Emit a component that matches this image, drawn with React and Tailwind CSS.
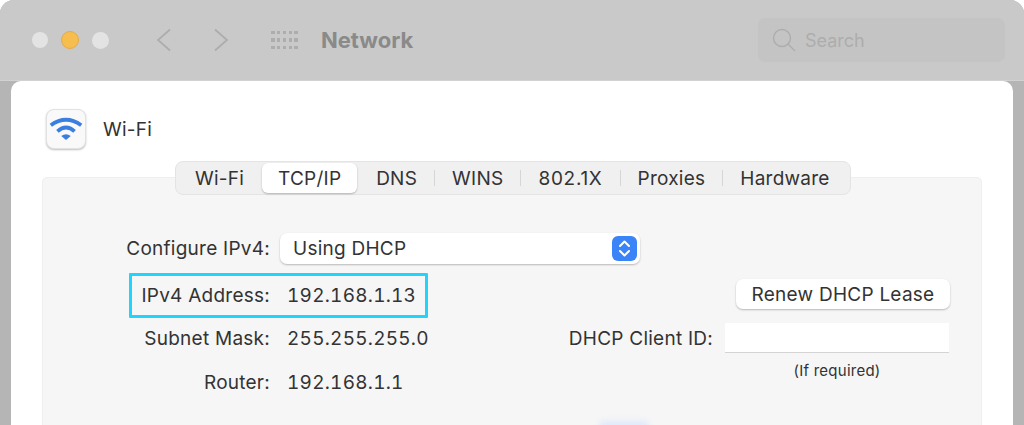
const tabs = ['Wi-Fi', 'TCP/IP', 'DNS', 'WINS', '802.1X', 'Proxies', 'Hardware'];

function WifiIcon() {
  return (
    <svg viewBox="0 0 40 40" className="w-[40px] h-[40px]" fill="none" stroke="#3a7fe0" strokeWidth="4">
      <path d="M4 16Q20 4.5 36 16" />
      <path d="M11 22.5Q20 14.5 29 22.5" />
      <path d="M20 31.5L15 27.3Q20 23.8 25 27.3Z" fill="#3a7fe0" stroke="none" />
    </svg>
  );
}

function Row({ label, value }) {
  return (
    <div className="flex items-center gap-[17px] h-[44px] pt-[2px] whitespace-nowrap">
      <span className="w-[141px] shrink-0 text-right">{label}</span>
      <span className="tabular-nums">{value}</span>
    </div>
  );
}

export default function App() {
  return (
    <div className="w-[1024px] h-[425px] overflow-hidden bg-white text-[19px] tracking-[0.25px] text-[#333333]" style={{ fontFamily: 'Inter, "Noto Sans", sans-serif' }}>
      <div className="h-[425px] rounded-t-[14px] bg-[#b5b5b5] flex flex-col">
        {/* Title bar */}
        <div className="h-[81px] shrink-0 rounded-t-[14px] bg-[#c9c9c9] border-b border-[#d2d2d2] flex items-center pl-[32px] pr-[19px]">
          <div className="flex items-center">
            <div className="w-[16px] h-[16px] rounded-full bg-[#e3e3e3]" />
            <div className="ml-[13px] w-[18px] h-[18px] rounded-full bg-[#f6bd4f] border border-[#e5ab45]" />
            <div className="ml-[13px] w-[17px] h-[17px] rounded-full bg-[#e3e3e3]" />
          </div>
          <svg viewBox="0 0 16 24" className="ml-[47px] w-[16px] h-[24px]" fill="none" stroke="#adadad" strokeWidth="1.8">
            <path d="M14 1.5L2 12L14 22.5" />
          </svg>
          <svg viewBox="0 0 16 24" className="ml-[41px] w-[16px] h-[24px]" fill="none" stroke="#adadad" strokeWidth="1.8">
            <path d="M2 1.5L14 12L2 22.5" />
          </svg>
          <div className="ml-[42px] grid grid-cols-5 gap-x-[2.25px] gap-y-[4px]">
            {Array.from({ length: 15 }).map((_, i) => (
              <div key={i} className="w-[3.6px] h-[3.6px] bg-[#adadad]" />
            ))}
          </div>
          <div className="ml-[23px] text-[22px] tracking-normal font-bold text-[#8a8a8a]">Network</div>
          <div className="ml-auto w-[247px] h-[44px] rounded-[7px] bg-[#c4c4c4] flex items-center pl-[14px] gap-[9px] text-[18px] tracking-normal">
            <svg viewBox="0 0 24 24" className="w-[24px] h-[24px]" fill="none" stroke="#adadad" strokeWidth="1.4">
              <circle cx="10" cy="10" r="8.5" />
              <path d="M16 16L23 23" />
            </svg>
            <span className="text-[#adadad] pt-px">Search</span>
          </div>
        </div>

        {/* Pane */}
        <div className="flex-1 mx-[11px] rounded-t-[10px] bg-white px-[31px] pt-[28px]">
          <div className="flex items-center gap-[17px] h-[40px] ml-[4px]">
            <div className="w-[40px] h-[40px] rounded-[8px] bg-[#f9f9f9] border border-[#e2e2e2] shadow-[0_1px_2px_rgba(0,0,0,0.25)] flex items-center justify-center">
              <WifiIcon />
            </div>
            <span className="pt-[2px]">Wi-Fi</span>
          </div>

          <div className="relative mt-[28px] h-[300px] rounded-t-[5px] bg-[#f6f6f6] border border-[#efefef] pt-[55px] pl-[86px]">
            {/* Tabs */}
            <div className="absolute -top-[17px] left-[132px] w-[676px] h-[34px] flex items-center rounded-[8px] bg-[#f0f0f0] border border-[#e4e4e4] pl-[19px] whitespace-nowrap">
              {tabs.map((t, i) => (
                <div key={t} className="flex items-center shrink-0">
                  {t === 'TCP/IP' ? (
                    <div className="ml-[18px] mr-[2px] h-[30px] w-[95px] pt-[2px] rounded-[6px] bg-white shadow-[0_1px_2px_rgba(0,0,0,0.25)] flex items-center justify-center">{t}</div>
                  ) : (
                    <div className={`pt-[2px] ${i > 1 ? 'px-[17px]' : ''} ${t === '802.1X' ? 'tracking-[0.7px]' : ''}`}>{t}</div>
                  )}
                  {i > 1 && i < tabs.length - 1 && <div className="w-px h-[16px] bg-[#d6d6d6]" />}
                </div>
              ))}
            </div>

            {/* Configure row */}
            <div className="flex items-center gap-[10px] h-[31px]">
              <span className="w-[141px] shrink-0 flex justify-end whitespace-nowrap pt-[2px]">Configure IPv4:</span>
              <div className="w-[360px] h-[31px] rounded-[7px] bg-white shadow-[0_1px_2px_rgba(0,0,0,0.25)] flex items-center justify-between pl-[13px] pr-[3px]">
                <span className="pt-[2px]">Using DHCP</span>
                <div className="w-[25px] h-[25px] rounded-[6px] bg-[#3a84f7] flex items-center justify-center">
                  <svg viewBox="0 0 25 25" className="w-[25px] h-[25px]" fill="none" stroke="white" strokeWidth="2" strokeLinecap="round" strokeLinejoin="round">
                    <path d="M8 10L12.5 5.5L17 10" />
                    <path d="M8 15L12.5 19.5L17 15" />
                  </svg>
                </div>
              </div>
            </div>

            <div className="flex pt-[9px]">
              {/* Left column */}
              <div className="w-[299px] shrink-0">
                <div className="h-[45px] mb-[-2px] flex items-center gap-[17px] border-[3px] border-[#22d3fb] rounded-[1px] whitespace-nowrap">
                  <span className="w-[138px] shrink-0 text-right pt-[2px]">IPv4 Address:</span>
                  <span className="tabular-nums pt-[2px]">192.168.1.13</span>
                </div>
                <Row label="Subnet Mask:" value="255.255.255.0" />
                <Row label="Router:" value="192.168.1.1" />
                <div className="mt-[17px] ml-[470px] w-[50px] h-[10px] rounded-[5px] bg-[#dfe9fa] blur-[3px]" />
              </div>

              {/* Right column */}
              <div className="flex-1 flex flex-col items-end pr-[31px] pt-[6px]">
                <button className="w-[214px] h-[30px] pt-[2px] rounded-[7px] bg-white shadow-[0_1px_2px_rgba(0,0,0,0.25)]">Renew DHCP Lease</button>
                <div className="mt-[14px] mr-[1px] flex items-center gap-[12px]">
                  <span className="whitespace-nowrap pt-[2px]">DHCP Client ID:</span>
                  <div className="w-[224px] h-[30px] bg-white border-b border-[#d4d4d4]" />
                </div>
                <div className="w-[224px] mr-[1px] mt-[6px] text-center text-[15px]">(If required)</div>
              </div>
            </div>
          </div>
        </div>
      </div>
    </div>
  );
}
